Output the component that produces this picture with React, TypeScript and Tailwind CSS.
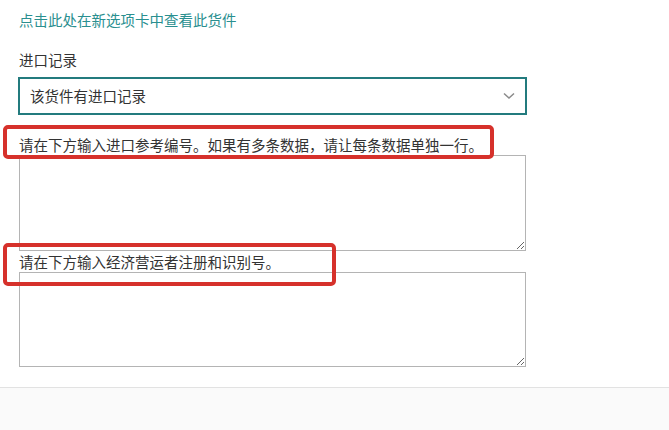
import React from 'react';

const font = { fontFamily: '"Noto Sans CJK SC", "Noto Sans", sans-serif' };

const App: React.FC = () => {
    return (
        <div className="relative w-[669px] h-[430px] bg-white flex flex-col text-[#333]" style={font}>
            {/* Form */}
            <div className="flex flex-col px-[19px] pt-[11px]">
                <a className="text-[14.5px] leading-[18px] text-[#2a8f8f] cursor-pointer">点击此处在新选项卡中查看此货件</a>

                <label className="mt-[22px] text-[14.5px] leading-[18px] text-[#333]">进口记录</label>
                <div className="mt-[8px] -ml-px w-[509px] h-[38px] border-2 border-[#237b7e] flex items-center justify-between pl-[10px] pr-[10px]">
                    <span className="text-[14.5px] leading-[18px] text-[#333]">该货件有进口记录</span>
                    <svg width="12" height="8" viewBox="0 0 12 8" fill="none" stroke="#8a8a8a" strokeWidth="1.5">
                        <path d="M1 1.5 L6 6 L11 1.5" />
                    </svg>
                </div>

                <label className="mt-[21px] text-[14.5px] leading-[18px] text-[#333]">请在下方输入进口参考编号。如果有多条数据，请让每条数据单独一行。</label>
                <textarea className="mt-px w-[507px] h-[96px] border border-[#b4b4b4] bg-white outline-none" />

                <label className="mt-[2px] text-[14.5px] leading-[18px] text-[#333]">请在下方输入经济营运者注册和识别号。</label>
                <textarea className="mt-px w-[507px] h-[95px] border border-[#b4b4b4] bg-white outline-none" />
            </div>

            {/* Footer */}
            <div className="mt-[20px] flex-1 border-t border-[#e2e2e2] bg-[#fafafa]" />

            {/* Annotation boxes */}
            <div className="absolute left-[3px] top-[125px] w-[491px] h-[34px] border-[4px] border-[#d6312b] rounded-[5px] pointer-events-none" />
            <div className="absolute left-[3px] top-[243px] w-[333px] h-[43px] border-[4px] border-[#d6312b] rounded-[5px] pointer-events-none" />
        </div>
    );
};

export default App;
